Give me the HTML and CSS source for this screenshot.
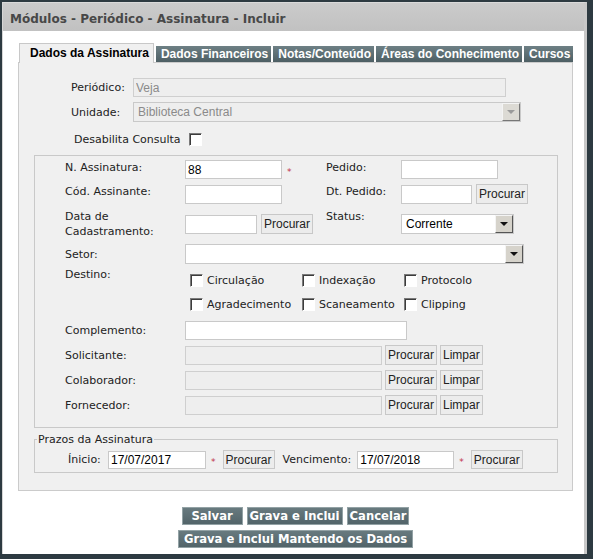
FILE: index.html
```html
<!DOCTYPE html>
<html lang="pt">
<head>
<meta charset="utf-8">
<title>Módulos - Periódico - Assinatura - Incluir</title>
<link rel="stylesheet" href="styles.css">
</head>
<body>
<div class="frame">
  <div class="titlebar">Módulos - Periódico - Assinatura - Incluir</div>
  <div class="content">
    <div class="tabs">
      <div class="tab active">Dados da Assinatura</div>
      <div class="tab">Dados Financeiros</div>
      <div class="tab">Notas/Conteúdo</div>
      <div class="tab">Áreas do Conhecimento</div>
      <div class="tab">Cursos</div>
    </div>
    <div class="panel">
      <div class="hrow">
        <span class="hlabel">Periódico:</span>
        <input class="field disabled w372" value="Veja" readonly>
      </div>
      <div class="hrow mt5">
        <span class="hlabel">Unidade:</span>
        <div class="select disabled w387"><span class="sel-text">Biblioteca Central</span><span class="sel-btn"><span class="tri"></span></span></div>
      </div>
      <div class="crow">
        <span>Desabilita Consulta</span><input type="checkbox" class="cb">
      </div>

      <div class="box">
        <div class="grid3">
          <span class="lbl top">N. Assinatura:</span>
          <div class="cell"><input class="field w96" value="88"><span class="req">*</span></div>
          <span class="lbl top">Pedido:</span>
          <div class="cell"><input class="field w96"></div>

          <span class="lbl top">Cód. Assinante:</span>
          <div class="cell"><input class="field w96"></div>
          <span class="lbl top">Dt. Pedido:</span>
          <div class="cell"><input class="field w70"><button class="btn">Procurar</button></div>

          <span class="lbl">Data de<br>Cadastramento:</span>
          <div class="cell"><input class="field w71"><button class="btn">Procurar</button></div>
          <span class="lbl top">Status:</span>
          <div class="cell"><div class="select w112"><span class="sel-text dark">Corrente</span><span class="sel-btn"><span class="tri"></span></span></div></div>
        </div>

        <div class="row">
          <span class="lbl">Setor:</span>
          <div class="select w338"><span class="sel-text"></span><span class="sel-btn"><span class="tri"></span></span></div>
        </div>

        <div class="row destino">
          <span class="lbl">Destino:</span>
          <div class="checks">
            <label class="chk"><input type="checkbox" class="cb">Circulação</label>
            <label class="chk"><input type="checkbox" class="cb">Indexação</label>
            <label class="chk"><input type="checkbox" class="cb">Protocolo</label>
            <label class="chk"><input type="checkbox" class="cb">Agradecimento</label>
            <label class="chk"><input type="checkbox" class="cb">Scaneamento</label>
            <label class="chk"><input type="checkbox" class="cb">Clipping</label>
          </div>
        </div>

        <div class="row">
          <span class="lbl">Complemento:</span>
          <input class="field w221">
        </div>
        <div class="row">
          <span class="lbl">Solicitante:</span>
          <input class="field disabled w196" readonly><button class="btn">Procurar</button><button class="btn">Limpar</button>
        </div>
        <div class="row">
          <span class="lbl">Colaborador:</span>
          <input class="field disabled w196" readonly><button class="btn">Procurar</button><button class="btn">Limpar</button>
        </div>
        <div class="row">
          <span class="lbl">Fornecedor:</span>
          <input class="field disabled w196" readonly><button class="btn">Procurar</button><button class="btn">Limpar</button>
        </div>
      </div>

      <fieldset class="prazos">
        <legend>Prazos da Assinatura</legend>
        <div class="prow">
          <span class="plbl">Ínicio:</span>
          <input class="field w97" value="17/07/2017"><span class="req">*</span><button class="btn ml7">Procurar</button>
          <span class="plbl2">Vencimento:</span>
          <input class="field w96" value="17/07/2018"><span class="req">*</span><button class="btn ml7">Procurar</button>
        </div>
      </fieldset>
    </div>

    <div class="actions">
      <div class="arow">
        <button class="abtn salvar">Salvar</button>
        <button class="abtn">Grava e Inclui</button>
        <button class="abtn">Cancelar</button>
      </div>
      <div class="arow">
        <button class="abtn wide">Grava e Inclui Mantendo os Dados</button>
      </div>
    </div>
  </div>
</div>
</body>
</html>
```

FILE: styles.css
```css
* { box-sizing: border-box; }
html, body { margin: 0; padding: 0; }
body {
  background: #2d3a41;
  width: 593px;
  height: 559px;
  overflow: hidden;
  font-family: "DejaVu Sans", Verdana, sans-serif;
  font-size: 11px;
  color: #222;
}
.frame {
  margin: 2px 6px 0 2px;
  height: 552px;
  background: #fff;
  border-left: 1px solid #d6d6d6;
  border-right: 3px solid #c8c8c8;
  border-top: 1px solid #dadada;
  display: flex;
  flex-direction: column;
}
.titlebar {
  height: 28px;
  background: linear-gradient(#cbcbcb, #c1c1c1);
  color: #484848;
  font-weight: bold;
  font-size: 12px;
  padding: 9px 0 0 7px;
  line-height: 14px;
}
.content {
  padding: 12px 11px 0 15px;
}
.tabs {
  display: flex;
  align-items: flex-end;
  gap: 2px;
  margin-left: 1px;
  height: 19px;
}
.tab {
  height: 16px;
  line-height: 16px;
  padding: 0 3px 0 5px;
  background: linear-gradient(#6e8085, #4d5f64);
  color: #fff;
  font-family: "Liberation Sans", Arial, sans-serif;
  font-weight: bold;
  font-size: 12px;
  white-space: nowrap;
}
.tab.active {
  height: 20px;
  line-height: 19px;
  background: #f0f0f0;
  color: #000;
  border: 1px solid #c8c8c8;
  border-bottom: none;
  padding: 0 4px 0 10px;
  position: relative;
  z-index: 1;
  margin-bottom: -1px;
}
.panel {
  width: 555px;
  background: #f0f0f0;
  border: 1px solid #cbcbcb;
  padding: 15px 0 17px 0;
}
.hrow {
  display: flex;
  align-items: center;
  margin-left: 52px;
}
.mt5 { margin-top: 5px; }
.hlabel { width: 62px; }
.crow {
  display: flex;
  align-items: center;
  margin: 9px 0 0 55px;
  height: 16px;
}
.crow .cb { margin-left: 8px; }

.field {
  height: 19px;
  border: 1px solid #c9c9c9;
  background: #fff;
  font-family: "Liberation Sans", Arial, sans-serif;
  font-size: 12px;
  color: #000;
  padding: 0 2px;
  margin: 0;
  outline: none;
}
.field.disabled { background: #eeeeee; color: #8a8a8a; border-color: #cfcfcf; }
.w372 { width: 373px; }
.w387 { width: 388px; }
.w96 { width: 97px; }
.w97 { width: 98px; }
.w70 { width: 71px; }
.w71 { width: 72px; }
.w112 { width: 113px; }
.w338 { width: 339px; }
.w221 { width: 222px; }
.w196 { width: 197px; }

.select {
  height: 20px;
  border: 1px solid #c9c9c9;
  background: #fff;
  display: flex;
  align-items: center;
  justify-content: space-between;
  font-family: "Liberation Sans", Arial, sans-serif;
  font-size: 12px;
}
.select.disabled { background: #eeeeee; }
.select.disabled .sel-text { color: #8a8a8a; }
.sel-text { padding-left: 4px; color: #777; }
.sel-text.dark { color: #000; }
.sel-btn {
  width: 18px;
  height: 18px;
  background: #d6d3cb;
  border-top: 1px solid #f4f4f4;
  border-left: 1px solid #f4f4f4;
  border-right: 1px solid #555;
  border-bottom: 1px solid #555;
  display: flex;
  align-items: center;
  justify-content: center;
}
.tri {
  width: 0;
  height: 0;
  border-left: 4px solid transparent;
  border-right: 4px solid transparent;
  border-top: 4px solid #111;
}
.select.disabled .sel-btn { background: #dcdad4; border-right-color: #777; border-bottom-color: #777; }
.select.disabled .tri { border-top-color: #9a9a9a; }

.cb {
  appearance: none;
  -webkit-appearance: none;
  width: 13px;
  height: 13px;
  margin: 0;
  background: #fff;
  border-top: 1px solid #7a7a7a;
  border-left: 1px solid #7a7a7a;
  border-right: 1px solid #fff;
  border-bottom: 1px solid #fff;
  box-shadow: inset 1px 1px 0 #3c3c3c;
}

.box {
  width: 524px;
  margin: 8px 0 0 15px;
  border: 1px solid #c9c9c9;
  padding: 4px 0 12px 30px;
}
.grid3 {
  display: grid;
  grid-template-columns: 120px 141px 75px auto;
  row-gap: 5px;
  align-items: center;
}
.cell { display: flex; align-items: center; }
.lbl { line-height: 15px; }
.lbl.top { align-self: start; }
.req {
  color: #c0304a;
  font-size: 9px;
  margin-left: 5px;
  position: relative;
  top: 2px;
}
.btn {
  height: 20px;
  margin: 0 0 0 4px;
  padding: 0 2px;
  border: 1px solid #c8c8c8;
  background: #ececec;
  font-family: "Liberation Sans", Arial, sans-serif;
  font-size: 12px;
  color: #222;
}
.row {
  display: flex;
  align-items: center;
  margin-top: 5px;
}
.row .lbl { width: 120px; flex: none; }
.row .btn { margin-left: 3px; }
.destino { align-items: flex-start; margin-top: 3px; }
.checks {
  display: grid;
  grid-template-columns: 112px 102px auto;
  grid-auto-rows: 24px;
  padding-top: 1px;
  margin-left: 5px;
}
.chk { display: flex; align-items: center; }
.chk .cb { margin-right: 4px; }

.prazos {
  width: 524px;
  margin: 5px 0 0 15px;
  border: 1px solid #c9c9c9;
  padding: 0 0 3px 2px;
}
.prazos legend {
  padding: 0 1px;
  font-size: 11px;
  line-height: 13px;
}
.prow {
  display: flex;
  align-items: center;
  padding-left: 31px;
  margin-top: 4px;
}
.plbl { width: 40px; }
.plbl2 { margin: 0 6px 0 8px; }
.prow .field { height: 18px; }
.prow .btn { height: 19px; }
.ml7 { margin-left: 7px; }

.actions {
  display: flex;
  flex-direction: column;
  align-items: center;
  gap: 5px;
  margin-top: 16px;
}
.arow { display: flex; gap: 4px; }
.abtn {
  height: 18px;
  padding: 0 2px;
  margin: 0;
  background: linear-gradient(#687a7f, #526469);
  border: 1px solid #93a2a5;
  color: #fff;
  font-family: "DejaVu Sans", Verdana, sans-serif;
  font-weight: bold;
  font-size: 11.6px;
  line-height: 16px;
}
.abtn.salvar { width: 61px; }
.abtn.wide { padding: 0 5px; }
```
